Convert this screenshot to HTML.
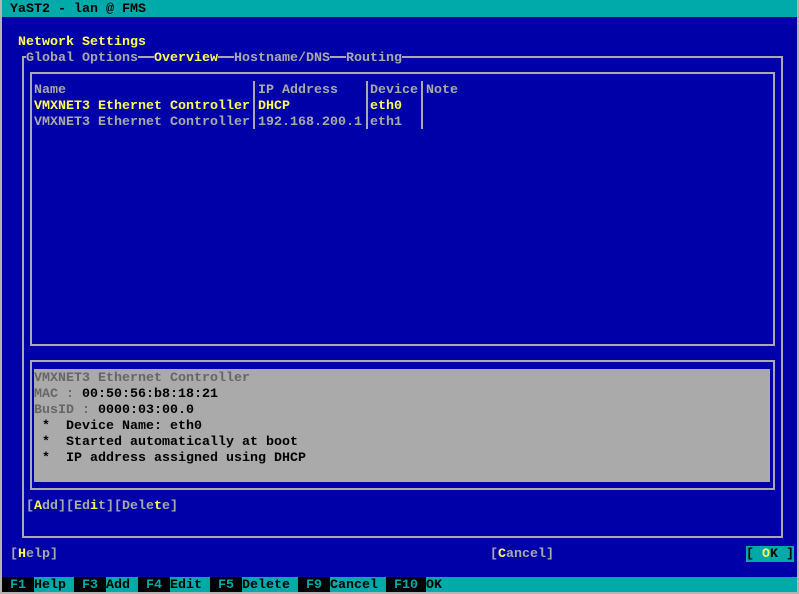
<!DOCTYPE html>
<html><head><meta charset="utf-8"><style>
*{margin:0;padding:0;box-sizing:border-box}
body{width:799px;height:594px;background:#b4b4b4;position:relative;overflow:hidden;font-family:"Liberation Mono","DejaVu Sans Mono",monospace;font-weight:bold;font-size:13.33px;line-height:16px}
#scr{position:absolute;left:2px;top:0;width:795px;height:592px;background:#0000a8}
.t{position:absolute;white-space:pre;height:16px;color:#aaaaaa;padding-top:2px;line-height:16px}
.y{color:#ffff55}.k{color:#000}.g{color:#aaaaaa}.d{color:#666}
.ln{position:absolute;background:#aaaaaa}
.kb,.kc{display:inline-block;height:15px;line-height:15px;padding-top:1px;vertical-align:top}
.kb{background:#000;color:#00aaaa}
.kc{background:#00aaaa;color:#000}
</style></head><body>
<div id="scr"></div>
<div style="position:absolute;left:2px;top:0;width:795px;height:17px;background:#00aaaa"></div>
<div class="t k" style="left:10px;top:0px">YaST2 - lan @ FMS</div>
<div class="ln" style="left:22px;top:56px;width:761px;height:2px"></div>
<div class="ln" style="left:22px;top:56px;width:2px;height:482px"></div>
<div class="ln" style="left:781px;top:56px;width:2px;height:482px"></div>
<div class="ln" style="left:22px;top:536px;width:761px;height:2px"></div>
<div class="t y" style="left:18px;top:33px">Network Settings</div>
<div class="t" style="left:26px;top:49px;background:#0000a8;height:17px">Global Options</div>
<div class="t y" style="left:154px;top:49px;background:#0000a8;height:17px">Overview</div>
<div class="t" style="left:234px;top:49px;background:#0000a8;height:17px">Hostname/DNS</div>
<div class="t" style="left:346px;top:49px;background:#0000a8;height:17px">Routing</div>
<div class="ln" style="left:30px;top:72px;width:745px;height:2px"></div>
<div class="ln" style="left:30px;top:72px;width:2px;height:274px"></div>
<div class="ln" style="left:773px;top:72px;width:2px;height:274px"></div>
<div class="ln" style="left:30px;top:344px;width:745px;height:2px"></div>
<div class="ln" style="left:253px;top:81px;width:2px;height:48px"></div>
<div class="ln" style="left:366px;top:81px;width:2px;height:48px"></div>
<div class="ln" style="left:421px;top:81px;width:2px;height:48px"></div>
<div class="t" style="left:34px;top:81px">Name</div>
<div class="t" style="left:258px;top:81px">IP Address</div>
<div class="t" style="left:370px;top:81px">Device</div>
<div class="t" style="left:426px;top:81px">Note</div>
<div class="t y" style="left:34px;top:97px">VMXNET3 Ethernet Controller</div>
<div class="t y" style="left:258px;top:97px">DHCP</div>
<div class="t y" style="left:370px;top:97px">eth0</div>
<div class="t" style="left:34px;top:113px">VMXNET3 Ethernet Controller</div>
<div class="t" style="left:258px;top:113px">192.168.200.1</div>
<div class="t" style="left:370px;top:113px">eth1</div>
<div class="ln" style="left:30px;top:360px;width:745px;height:2px"></div>
<div class="ln" style="left:30px;top:360px;width:2px;height:130px"></div>
<div class="ln" style="left:773px;top:360px;width:2px;height:130px"></div>
<div class="ln" style="left:30px;top:488px;width:745px;height:2px"></div>
<div style="position:absolute;left:34px;top:369px;width:736px;height:113px;background:#aaaaaa"></div>
<div class="t d" style="left:34px;top:369px">VMXNET3 Ethernet Controller</div>
<div class="t" style="left:34px;top:385px"><span class="d">MAC :</span><span class="k"> 00:50:56:b8:18:21</span></div>
<div class="t" style="left:34px;top:401px"><span class="d">BusID :</span><span class="k"> 0000:03:00.0</span></div>
<div class="t k" style="left:34px;top:417px"> *  Device Name: eth0</div>
<div class="t k" style="left:34px;top:433px"> *  Started automatically at boot</div>
<div class="t k" style="left:34px;top:449px"> *  IP address assigned using DHCP</div>
<div class="t" style="left:26px;top:497px">[<span class="y">A</span>dd][Ed<span class="y">i</span>t][Dele<span class="y">t</span>e]</div>
<div class="t" style="left:10px;top:545px">[<span class="y">H</span>elp]</div>
<div class="t" style="left:490px;top:545px">[<span class="y">C</span>ancel]</div>
<div style="position:absolute;left:746px;top:546px;width:48px;height:16px;background:#00aaaa"></div>
<div class="t k" style="left:746px;top:545px">[ <span class="y">O</span>K ]</div>
<div style="position:absolute;left:2px;top:577px;width:795px;height:15px;background:#00aaaa"></div>
<div style="position:absolute;left:2px;top:577px;height:15px;overflow:hidden;white-space:pre;line-height:15px"><span class="kb"> F1 </span><span class="kc">Help </span><span class="kb"> F3 </span><span class="kc">Add </span><span class="kb"> F4 </span><span class="kc">Edit </span><span class="kb"> F5 </span><span class="kc">Delete </span><span class="kb"> F9 </span><span class="kc">Cancel </span><span class="kb"> F10 </span><span class="kc">OK</span></div>
</body></html>
